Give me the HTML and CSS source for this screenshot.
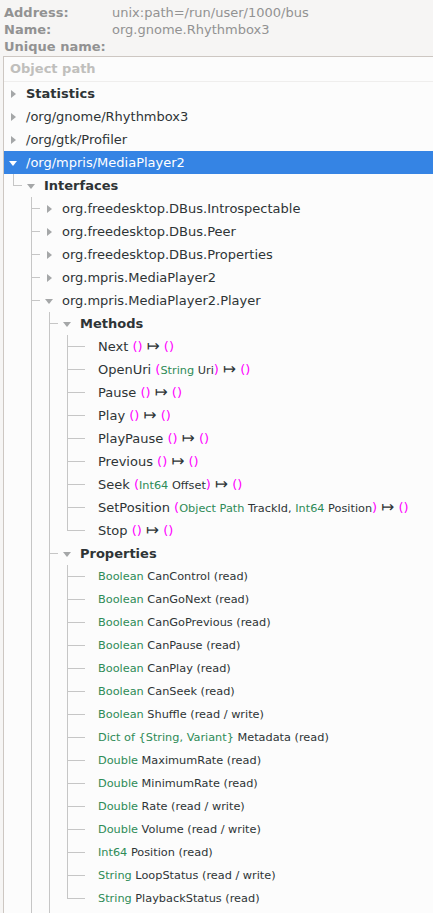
FILE: index.html
```html
<!DOCTYPE html>
<html lang="en">
<head>
  <meta charset="UTF-8">
  <title>Object path</title>
  <link rel="stylesheet" href="styles.css">
</head>
<body>
  <div class="info">
    <span class="key">Address:</span><span class="val">unix:path=/run/user/1000/bus</span>
    <span class="key">Name:</span><span class="val">org.gnome.Rhythmbox3</span>
    <span class="key">Unique name:</span><span class="val"></span>
  </div>

  <div class="tree">
    <div class="colhead">Object path</div>

    <div class="row"><span class="exp shut"></span><span class="label bold">Statistics</span></div>
    <div class="row"><span class="exp shut"></span><span class="label">/org/gnome/Rhythmbox3</span></div>
    <div class="row"><span class="exp shut"></span><span class="label">/org/gtk/Profiler</span></div>
    <div class="row selected"><span class="exp open"></span><span class="label">/org/mpris/MediaPlayer2</span></div>

    <div class="row"><span class="g ell"></span><span class="exp open"></span><span class="label bold">Interfaces</span></div>
    <div class="row"><span class="g"></span><span class="g tee"></span><span class="exp shut"></span><span class="label">org.freedesktop.DBus.Introspectable</span></div>
    <div class="row"><span class="g"></span><span class="g tee"></span><span class="exp shut"></span><span class="label">org.freedesktop.DBus.Peer</span></div>
    <div class="row"><span class="g"></span><span class="g tee"></span><span class="exp shut"></span><span class="label">org.freedesktop.DBus.Properties</span></div>
    <div class="row"><span class="g"></span><span class="g tee"></span><span class="exp shut"></span><span class="label">org.mpris.MediaPlayer2</span></div>
    <div class="row"><span class="g"></span><span class="g tee"></span><span class="exp open"></span><span class="label">org.mpris.MediaPlayer2.Player</span></div>

    <div class="row"><span class="g"></span><span class="g pipe"></span><span class="g tee"></span><span class="exp open"></span><span class="label bold">Methods</span></div>
    <div class="row"><span class="g"></span><span class="g pipe"></span><span class="g pipe"></span><span class="g tee"></span><span class="exp leaf"></span><span class="label">Next <span class="p">()</span> <span class="arr">↦</span> <span class="p">()</span></span></div>
    <div class="row"><span class="g"></span><span class="g pipe"></span><span class="g pipe"></span><span class="g tee"></span><span class="exp leaf"></span><span class="label">OpenUri <span class="p">(</span><span class="sm"><span class="t">String</span> Uri</span><span class="p">)</span> <span class="arr">↦</span> <span class="p">()</span></span></div>
    <div class="row"><span class="g"></span><span class="g pipe"></span><span class="g pipe"></span><span class="g tee"></span><span class="exp leaf"></span><span class="label">Pause <span class="p">()</span> <span class="arr">↦</span> <span class="p">()</span></span></div>
    <div class="row"><span class="g"></span><span class="g pipe"></span><span class="g pipe"></span><span class="g tee"></span><span class="exp leaf"></span><span class="label">Play <span class="p">()</span> <span class="arr">↦</span> <span class="p">()</span></span></div>
    <div class="row"><span class="g"></span><span class="g pipe"></span><span class="g pipe"></span><span class="g tee"></span><span class="exp leaf"></span><span class="label">PlayPause <span class="p">()</span> <span class="arr">↦</span> <span class="p">()</span></span></div>
    <div class="row"><span class="g"></span><span class="g pipe"></span><span class="g pipe"></span><span class="g tee"></span><span class="exp leaf"></span><span class="label">Previous <span class="p">()</span> <span class="arr">↦</span> <span class="p">()</span></span></div>
    <div class="row"><span class="g"></span><span class="g pipe"></span><span class="g pipe"></span><span class="g tee"></span><span class="exp leaf"></span><span class="label">Seek <span class="p">(</span><span class="sm"><span class="t">Int64</span> Offset</span><span class="p">)</span> <span class="arr">↦</span> <span class="p">()</span></span></div>
    <div class="row"><span class="g"></span><span class="g pipe"></span><span class="g pipe"></span><span class="g tee"></span><span class="exp leaf"></span><span class="label">SetPosition <span class="p">(</span><span class="sm"><span class="t">Object Path</span> TrackId, <span class="t">Int64</span> Position</span><span class="p">)</span> <span class="arr">↦</span> <span class="p">()</span></span></div>
    <div class="row"><span class="g"></span><span class="g pipe"></span><span class="g pipe"></span><span class="g ell"></span><span class="exp leaf"></span><span class="label">Stop <span class="p">()</span> <span class="arr">↦</span> <span class="p">()</span></span></div>

    <div class="row"><span class="g"></span><span class="g pipe"></span><span class="g tee"></span><span class="exp open"></span><span class="label bold">Properties</span></div>
    <div class="row"><span class="g"></span><span class="g pipe"></span><span class="g pipe"></span><span class="g tee"></span><span class="exp leaf"></span><span class="label sm"><span class="t">Boolean</span> CanControl (read)</span></div>
    <div class="row"><span class="g"></span><span class="g pipe"></span><span class="g pipe"></span><span class="g tee"></span><span class="exp leaf"></span><span class="label sm"><span class="t">Boolean</span> CanGoNext (read)</span></div>
    <div class="row"><span class="g"></span><span class="g pipe"></span><span class="g pipe"></span><span class="g tee"></span><span class="exp leaf"></span><span class="label sm"><span class="t">Boolean</span> CanGoPrevious (read)</span></div>
    <div class="row"><span class="g"></span><span class="g pipe"></span><span class="g pipe"></span><span class="g tee"></span><span class="exp leaf"></span><span class="label sm"><span class="t">Boolean</span> CanPause (read)</span></div>
    <div class="row"><span class="g"></span><span class="g pipe"></span><span class="g pipe"></span><span class="g tee"></span><span class="exp leaf"></span><span class="label sm"><span class="t">Boolean</span> CanPlay (read)</span></div>
    <div class="row"><span class="g"></span><span class="g pipe"></span><span class="g pipe"></span><span class="g tee"></span><span class="exp leaf"></span><span class="label sm"><span class="t">Boolean</span> CanSeek (read)</span></div>
    <div class="row"><span class="g"></span><span class="g pipe"></span><span class="g pipe"></span><span class="g tee"></span><span class="exp leaf"></span><span class="label sm"><span class="t">Boolean</span> Shuffle (read / write)</span></div>
    <div class="row"><span class="g"></span><span class="g pipe"></span><span class="g pipe"></span><span class="g tee"></span><span class="exp leaf"></span><span class="label sm"><span class="t">Dict of {String, Variant}</span> Metadata (read)</span></div>
    <div class="row"><span class="g"></span><span class="g pipe"></span><span class="g pipe"></span><span class="g tee"></span><span class="exp leaf"></span><span class="label sm"><span class="t">Double</span> MaximumRate (read)</span></div>
    <div class="row"><span class="g"></span><span class="g pipe"></span><span class="g pipe"></span><span class="g tee"></span><span class="exp leaf"></span><span class="label sm"><span class="t">Double</span> MinimumRate (read)</span></div>
    <div class="row"><span class="g"></span><span class="g pipe"></span><span class="g pipe"></span><span class="g tee"></span><span class="exp leaf"></span><span class="label sm"><span class="t">Double</span> Rate (read / write)</span></div>
    <div class="row"><span class="g"></span><span class="g pipe"></span><span class="g pipe"></span><span class="g tee"></span><span class="exp leaf"></span><span class="label sm"><span class="t">Double</span> Volume (read / write)</span></div>
    <div class="row"><span class="g"></span><span class="g pipe"></span><span class="g pipe"></span><span class="g tee"></span><span class="exp leaf"></span><span class="label sm"><span class="t">Int64</span> Position (read)</span></div>
    <div class="row"><span class="g"></span><span class="g pipe"></span><span class="g pipe"></span><span class="g tee"></span><span class="exp leaf"></span><span class="label sm"><span class="t">String</span> LoopStatus (read / write)</span></div>
    <div class="row"><span class="g"></span><span class="g pipe"></span><span class="g pipe"></span><span class="g ell"></span><span class="exp leaf"></span><span class="label sm"><span class="t">String</span> PlaybackStatus (read)</span></div>

    <!-- next sibling rows continue below the fold -->
    <div class="row"><span class="g"></span><span class="g pipe"></span><span class="g tee"></span></div>
  </div>
</body>
</html>
```

FILE: styles.css
```css
* { box-sizing: border-box; }
html, body {
  margin: 0;
  height: 100%;
  overflow: hidden;
}
body {
  font-family: "DejaVu Sans", sans-serif;
  font-size: 13px;
  background-color: #f6f5f4;
  color: #2e3436;
}

.info {
  display: grid;
  grid-template-columns: 108px 1fr;
  padding: 4px 4px 1px;
  line-height: 17px;
  color: #929292;
}
.info .key { font-weight: bold; }

.tree {
  margin-left: 3px;
  border-top: 1px solid #cdc7c2;
  border-left: 1px solid #cdc7c2;
  background-color: #fcfcfc;
  min-height: 100%;
}
.colhead {
  height: 25px;
  line-height: 24px;
  padding-left: 6px;
  border-bottom: 1px solid #efeeed;
  font-weight: bold;
  color: #c0bfbc;
}

.row {
  display: flex;
  align-items: center;
  height: 23px;
  white-space: nowrap;
}
.row.selected {
  background-color: #3584e4;
  color: white;
}

/* tree guide cells: one per ancestor level */
.g {
  flex: none;
  width: 18px;
  align-self: stretch;
  --line: linear-gradient(#c6c6c6, #c6c6c6);
}
.g.pipe { background: var(--line) 9px 0 / 1px 100% no-repeat; }
.g.tee {
  background:
    var(--line) 9px 0 / 1px 100% no-repeat,
    var(--line) 9px 11px / 9px 1px no-repeat;
}
.g.ell {
  background:
    var(--line) 9px 0 / 1px 12px no-repeat,
    var(--line) 9px 11px / 9px 1px no-repeat;
}

.exp {
  flex: none;
  width: 18px;
  align-self: stretch;
  display: flex;
  align-items: center;
  justify-content: center;
}
.exp.shut::before {
  content: "";
  border-left: 5px solid #a5a7a8;
  border-top: 4px solid transparent;
  border-bottom: 4px solid transparent;
  margin-left: 1px;
}
.exp.open::before {
  content: "";
  border-top: 5px solid #a5a7a8;
  border-left: 4px solid transparent;
  border-right: 4px solid transparent;
  margin-top: 1px;
}
.selected .exp.open::before { border-top-color: white; }
.exp.leaf {
  background: linear-gradient(#c6c6c6, #c6c6c6) 0 11px / 9px 1px no-repeat;
}

.label {
  margin-left: 4px;
  line-height: 23px;
}
.bold { font-weight: bold; }
.sm { font-size: 11.3px; }
.p { color: #ff00ff; }
.t { color: #2e8b57; }
.arr {
  font-size: 15.5px;
  line-height: 1;
}
```
